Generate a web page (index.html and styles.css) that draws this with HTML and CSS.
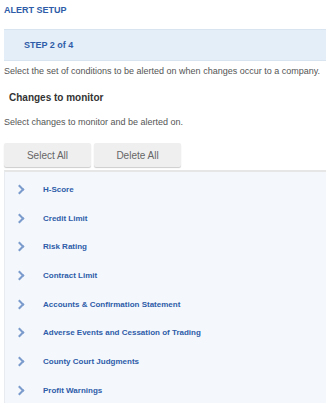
FILE: index.html
```html
<!DOCTYPE html>
<html lang="en">
<head>
    <meta charset="UTF-8">
    <meta name="viewport" content="width=device-width, initial-scale=1.0">
    <title>Alert Setup</title>
    <link rel="stylesheet" href="styles.css">
</head>
<body>
    <h1 class="page-title">ALERT SETUP</h1>

    <div class="step-box">STEP 2 of 4</div>

    <p class="intro">Select the set of conditions to be alerted on when changes occur to a company.</p>

    <h2 class="section-title">Changes to monitor</h2>
    <p class="intro">Select changes to monitor and be alerted on.</p>

    <div class="button-row">
        <button class="action-btn">Select All</button>
        <button class="action-btn">Delete All</button>
    </div>

    <ul class="change-list">
        <li class="change-item"><span class="chevron"></span>H-Score</li>
        <li class="change-item"><span class="chevron"></span>Credit Limit</li>
        <li class="change-item"><span class="chevron"></span>Risk Rating</li>
        <li class="change-item"><span class="chevron"></span>Contract Limit</li>
        <li class="change-item"><span class="chevron"></span>Accounts &amp; Confirmation Statement</li>
        <li class="change-item"><span class="chevron"></span>Adverse Events and Cessation of Trading</li>
        <li class="change-item"><span class="chevron"></span>County Court Judgments</li>
        <li class="change-item"><span class="chevron"></span>Profit Warnings</li>
    </ul>
</body>
</html>
```

FILE: styles.css
```css
body {
    font-family: "Liberation Sans", Arial, sans-serif;
    margin: 0;
    padding: 0 0 0 4px;
    background: #fff;
    color: #555;
}

.page-title {
    margin: 0;
    padding-top: 5px;
    height: 24px;
    font-size: 9px;
    font-weight: bold;
    color: #2e5ca8;
}

.step-box {
    height: 30px;
    line-height: 30px;
    padding-left: 20px;
    background-color: #e4eef8;
    border-top: 1px solid #d8e4f0;
    border-bottom: 1px solid #d8e4f0;
    font-size: 9px;
    font-weight: bold;
    color: #2e5ca8;
}

.intro {
    margin: 0;
    padding: 5px 0;
    font-size: 9px;
    color: #555;
}

.section-title {
    margin: 0;
    padding: 11px 0 9px 5px;
    font-size: 10px;
    font-weight: bold;
    color: #333;
}

.button-row {
    display: flex;
    gap: 3px;
    margin-top: 11px;
}

.action-btn {
    width: 87px;
    height: 24px;
    padding: 0;
    font-family: inherit;
    font-size: 10px;
    color: #666;
    background-color: #efefef;
    border: none;
    border-radius: 2px;
    box-shadow: 0 1px 1px rgba(0, 0, 0, 0.2);
}

.change-list {
    list-style: none;
    margin: 3px 0 0;
    padding: 3px 0 0;
    background-color: #f4f8fd;
    border-top: 2px solid #e6e6e6;
    border-left: 1px solid #e8ebef;
}

.change-item {
    display: flex;
    align-items: center;
    height: 28.7px;
    font-size: 8px;
    font-weight: bold;
    color: #2e5ca8;
}

.chevron {
    width: 5px;
    height: 5px;
    margin: 0 20px 0 11px;
    border-top: 2px solid #7b9bcc;
    border-right: 2px solid #7b9bcc;
    transform: rotate(45deg);
}
```
